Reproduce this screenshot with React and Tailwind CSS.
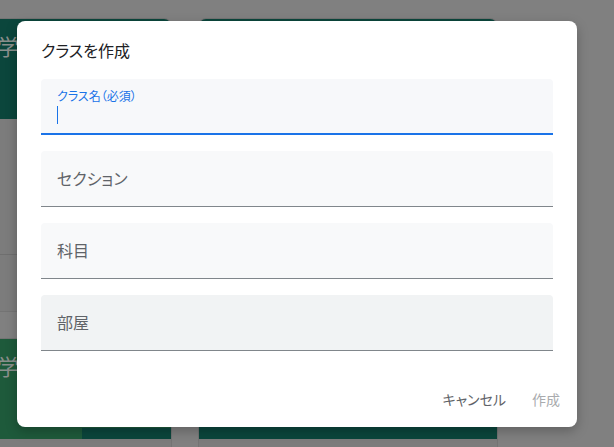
const font = "font-['Noto_Sans_CJK_JP','Roboto','Noto_Sans',sans-serif] [font-feature-settings:'palt']";

function ClassCard({ head, title, children }) {
  return (
    <div className="w-[300px] h-[294px] shrink-0 flex flex-col rounded-lg overflow-hidden border border-[#747474] bg-[#7c7c7c]">
      <div className={`relative h-[100px] shrink-0 pt-[12px] pl-[102px] text-[22px] leading-[28px] text-[#8a8f8c] ${head}`}>
        {title}
        {children}
      </div>
      <div className="flex-1" />
      <div className="h-[57px] border-t border-[#6f6f6f]" />
    </div>
  );
}

function Field({ label, active, bg = "bg-[#f8f9fa]" }) {
  if (active) {
    return (
      <div className="h-[56px] rounded-t-[4px] bg-[#f7f8fa] border-b-2 border-[#1a73e8] px-4 pt-[9px]">
        <div className="text-[12px] leading-[16px] text-[#1a73e8]">クラス名（必須）</div>
        <div className="mt-[2px] w-px h-[18px] bg-[#1a73e8]" />
      </div>
    );
  }
  return (
    <div className={`h-[56px] rounded-t-[4px] ${bg} border-b border-[#80868b] px-4 flex items-center`}>
      <span className="text-[16px] text-[#5f6368] -mt-[2px]">{label}</span>
    </div>
  );
}

export default function App() {
  return (
    <div className={`relative w-[614px] h-[447px] overflow-hidden bg-[#808080] ${font}`}>
      {/* page behind the dialog */}
      <div className="-ml-[128px] pt-[18px] grid grid-cols-[300px_300px] gap-[26px]">
        <ClassCard head="bg-[#0b463c]" title="数学" />
        <ClassCard head="bg-[#0b463c]" title="" />
        <ClassCard head="bg-[#1e5a3b]" title="数学">
          <div className="absolute bottom-0 right-0 w-[89px] h-[11px] bg-[#0b463c]" />
        </ClassCard>
        <ClassCard head="bg-[#0b463c]" title="" />
      </div>

      {/* dialog */}
      <div className="absolute left-[17px] top-[21px] w-[560px] h-[406px] bg-white rounded-[8px] shadow-[0_4px_12px_rgba(0,0,0,0.25)] flex flex-col">
        <div className="px-6 pt-[17px]">
          <h2 className="h-6 text-[16px] leading-6 text-[#202124]">クラスを作成</h2>
          <div className="mt-[17px] flex flex-col gap-4">
            <Field active />
            <Field label="セクション" />
            <Field label="科目" />
            <Field label="部屋" bg="bg-[#f1f3f4]" />
          </div>
        </div>
        <div className="mt-auto mb-[10px] pr-[17px] flex justify-end items-center gap-[26px] text-[14px] leading-9">
          <span className="text-[#5f6368]">キャンセル</span>
          <span className="text-[#a9abae]">作成</span>
        </div>
      </div>
    </div>
  );
}
